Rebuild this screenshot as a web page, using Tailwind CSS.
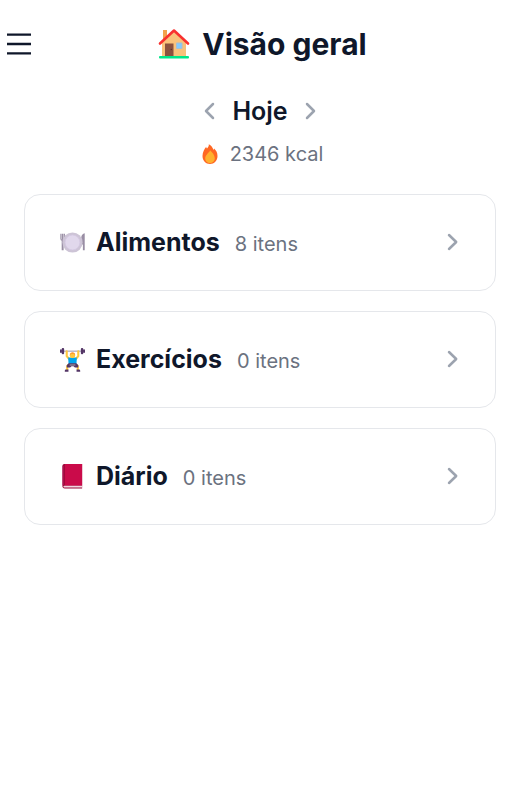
<!DOCTYPE html>
<html lang="pt-BR">
<head>
<meta charset="utf-8">
<meta name="viewport" content="width=device-width, initial-scale=1">
<title>Visão geral</title>
<script src="https://cdn.jsdelivr.net/npm/@tailwindcss/browser@4"></script>
</head>
<body class="min-h-screen bg-white font-['Inter',sans-serif] text-[#0f172a]">
<header class="grid grid-cols-[32px_1fr_28px] items-center pr-1 pl-[3px] pt-6">
  <button type="button" aria-label="Abrir menu" class="flex h-10 items-center justify-center">
    <svg class="h-6 w-6" viewBox="0 0 24 24" fill="none" stroke="currentColor" stroke-width="2.300" aria-hidden="true"><path d="M0 2.600h24M0 12h24M0 21.300h24"/></svg>
  </button>
  <h1 class="flex items-center justify-center gap-3 text-[30px] leading-10 font-bold">
    <svg class="h-8 w-8" viewBox="0 0 32 32" aria-hidden="true">
      <path d="M5 2h4v12H5z" fill="#f2a34c"/>
      <path d="M16 3 28 14v14H4V14z" fill="#f9c27b"/>
      <path d="M7 15.500h8.500V28H7z" fill="#8b513f"/><circle cx="13.300" cy="21.500" r=".7" fill="#5b3428"/>
      <path d="M18.500 15h5.500v5.500h-5.500z" fill="#83cbff" stroke="#a8bed0"/>
      <path d="M2 15.500 16 2.500l14 13" fill="none" stroke="#f8312f" stroke-width="2.600" stroke-linecap="round" stroke-linejoin="round"/>
      <rect x="1" y="28" width="30" height="2.500" rx="1" fill="#00e889"/>
    </svg>
    Visão geral
  </h1>
</header>
<main class="pr-[26px] pl-6">
  <section class="mt-[27px] flex flex-col items-center">
    <div class="flex h-10 items-center gap-[11px]">
      <button type="button" aria-label="Dia anterior" class="flex h-6 w-6 items-center justify-center text-[#9ca3af]">
        <svg class="h-6 w-6" viewBox="0 0 24 24" fill="none" stroke="currentColor" stroke-width="2.500" stroke-linecap="round" stroke-linejoin="round" aria-hidden="true"><path d="m16 5-7 7 7 7"/></svg>
      </button>
      <h2 class="text-[25px] leading-10 font-semibold">Hoje</h2>
      <button type="button" aria-label="Próximo dia" class="flex h-6 w-6 items-center justify-center text-[#9ca3af]">
        <svg class="h-6 w-6" viewBox="0 0 24 24" fill="none" stroke="currentColor" stroke-width="2.500" stroke-linecap="round" stroke-linejoin="round" aria-hidden="true"><path d="m8 5 7 7-7 7"/></svg>
      </button>
    </div>
    <p class="mt-[9px] flex items-center gap-[10px] pl-[3px] text-[20px] leading-7 text-[#6b7280]">
      <svg class="h-5 w-5" viewBox="0 0 20 20" aria-hidden="true">
        <path d="M8.800.3c.3 1.700-.6 3-1.800 4.200-.6-.5-.8-1-.8-1.700C4.500 5 2.500 8.200 2.500 12c0 4.600 3.300 8 7.500 8s7.500-3.400 7.500-8c0-3.500-1.500-5.700-3.400-7.500l-.5 1.500C12.600 3.500 11.200 1.200 8.800.3z" fill="#ff6723"/>
        <path d="M10 6.200c.1 1.700-4.800 4.500-4.800 8 0 2.800 2.100 4.800 4.800 4.800s4.800-2 4.800-4.800c0-3.300-2.600-6-4.800-8z" fill="#ffb02e"/>
      </svg>
      2346 kcal
    </p>
  </section>
  <nav aria-label="Seções" class="mt-[26px] flex flex-col gap-5">
    <a href="#alimentos" class="flex items-center rounded-2xl border border-gray-200 px-[35px] pt-[27px] pb-7">
      <svg class="h-[25px] w-[25px]" viewBox="0 0 26 26" aria-hidden="true">
        <path d="M1 4v5c0 1 .7 1.600 1.400 1.800V21M4.500 4v5c0 1-.7 1.600-1.400 1.800V21M2.750 4v17" fill="none" stroke="#998ea4" stroke-width="1.300"/>
        <path d="M25.700 3.500V21h-1.900v-6h-1.700V8c0-2.500 1.600-4 3.600-4.500z" fill="#998ea4"/>
        <circle cx="13" cy="13" r="10.500" fill="#cdc4d6"/><circle cx="13" cy="13" r="7.700" fill="#e1d8ec" stroke="#d4c8e2" stroke-width=".8"/>
      </svg>
      <span class="ml-[11px] flex items-baseline gap-[15px]"><span class="text-[25px] leading-10 font-bold">Alimentos</span><span class="text-[20px] leading-7 text-[#6b7280]">8 itens</span></span>
      <svg class="ml-auto h-5 w-5 text-[#9ca3af]" viewBox="0 0 20 20" fill="none" stroke="currentColor" stroke-width="2.500" stroke-linecap="round" stroke-linejoin="round" aria-hidden="true"><path d="m9 3 7.200 7-7.200 7"/></svg>
    </a>
    <a href="#exercicios" class="flex items-center rounded-2xl border border-gray-200 px-[35px] pt-[27px] pb-7">
      <svg class="h-[25px] w-[25px]" viewBox="0 0 26 26" aria-hidden="true">
        <path d="M3 4.300h20" stroke="#998ea4" stroke-width="1"/>
        <path d="m9.500 12.500-2.500-3V4.500m9.500 8 2.500-3V4.500" fill="none" stroke="#ffc83d" stroke-width="2.200" stroke-linecap="round" stroke-linejoin="round"/>
        <path d="M9 18.500 7.500 20v4M17 18.500l1.500 1.500v4" fill="none" stroke="#ffc83d" stroke-width="2.200"/>
        <path d="M8.500 11h9l-.5 8H9z" fill="#00a6ed"/>
        <path d="M9 17h8l2 2v2.300h-3.500l-1.500-1.300h-2l-1.500 1.300H7V19z" fill="#533566"/>
        <path d="M10 17.500h6v2.200h-6z" fill="#7d7089"/>
        <circle cx="13" cy="8.800" r="2.700" fill="#ffc83d"/><path d="M10.200 9c-.2-2.700 1.300-3.600 2.800-3.600s3 .9 2.800 3.600l-1.200-1.600h-3.200z" fill="#ff9b2e"/>
        <rect x="0" y="2.300" width="2" height="4" rx="1" fill="#533566"/><rect x="1.800" y="1" width="2.500" height="6.600" rx="1" fill="#533566"/>
        <rect x="24" y="2.300" width="2" height="4" rx="1" fill="#533566"/><rect x="21.700" y="1" width="2.500" height="6.600" rx="1" fill="#533566"/>
        <path d="M5 25.700v-1.100c0-.8.600-1.200 1.400-1.200h2.400v2.300zM21 25.700v-1.100c0-.8-.6-1.200-1.400-1.200h-2.400v2.300z" fill="#533566"/>
      </svg>
      <span class="ml-[11px] flex items-baseline gap-[15px]"><span class="text-[25px] leading-10 font-bold">Exercícios</span><span class="text-[20px] leading-7 text-[#6b7280]">0 itens</span></span>
      <svg class="ml-auto h-5 w-5 text-[#9ca3af]" viewBox="0 0 20 20" fill="none" stroke="currentColor" stroke-width="2.500" stroke-linecap="round" stroke-linejoin="round" aria-hidden="true"><path d="m9 3 7.200 7-7.200 7"/></svg>
    </a>
    <a href="#diario" class="flex items-center rounded-2xl border border-gray-200 px-[35px] pt-[27px] pb-7">
      <svg class="h-[25px] w-[25px]" viewBox="0 0 26 26" aria-hidden="true">
        <path d="M4.500 0H23v25.500H5c-1.600 0-2.500-1-2.500-2.500V2c0-1.200.8-2 2-2z" fill="#990838"/>
        <path d="M5 0h18v22.500H5z" fill="#ca0b4a"/><path d="M3.200 2v20" stroke="#bb1d60"/>
        <path d="M4.500 22.500H23v2H4.500c-1.300 0-1.300-2 0-2z" fill="#f0d5df"/>
      </svg>
      <span class="ml-[11px] flex items-baseline gap-[15px]"><span class="text-[25px] leading-10 font-bold">Diário</span><span class="text-[20px] leading-7 text-[#6b7280]">0 itens</span></span>
      <svg class="ml-auto h-5 w-5 text-[#9ca3af]" viewBox="0 0 20 20" fill="none" stroke="currentColor" stroke-width="2.500" stroke-linecap="round" stroke-linejoin="round" aria-hidden="true"><path d="m9 3 7.200 7-7.200 7"/></svg>
    </a>
  </nav>
</main>
</body>
</html>
